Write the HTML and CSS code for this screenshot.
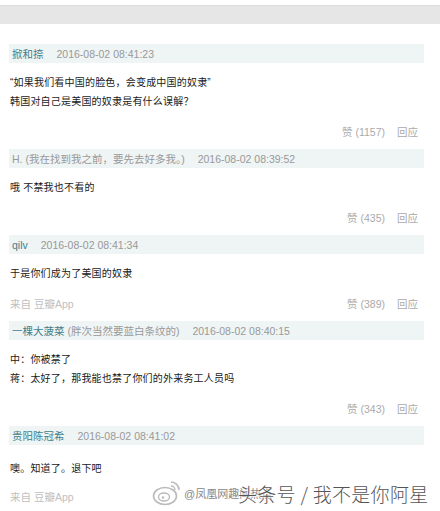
FILE: index.html
```html
<!DOCTYPE html>
<html lang="zh-CN">
<head>
  <meta charset="UTF-8">
  <title>回应</title>
  <link rel="stylesheet" href="styles.css">
</head>
<body>
  <div class="topbar"></div>

  <div class="comments">
    <div class="comment">
      <div class="comment-head">
        <span class="author">掀和捺</span>
        <span class="time">2016-08-02 08:41:23</span>
      </div>
      <div class="comment-body">
        <p>“如果我们看中国的脸色，会变成中国的奴隶”</p>
        <p>韩国对自己是美国的奴隶是有什么误解？</p>
      </div>
      <div class="comment-foot">
        <span class="from"></span>
        <span class="acts"><span>赞 (1157)</span><span>回应</span></span>
      </div>
    </div>

    <div class="comment">
      <div class="comment-head">
        <span class="author plain">H. (我在找到我之前，要先去好多我。)</span>
        <span class="time">2016-08-02 08:39:52</span>
      </div>
      <div class="comment-body">
        <p>哦 不禁我也不看的</p>
      </div>
      <div class="comment-foot">
        <span class="from"></span>
        <span class="acts"><span>赞 (435)</span><span>回应</span></span>
      </div>
    </div>

    <div class="comment">
      <div class="comment-head">
        <span class="author">qilv</span>
        <span class="time">2016-08-02 08:41:34</span>
      </div>
      <div class="comment-body">
        <p>于是你们成为了美国的奴隶</p>
      </div>
      <div class="comment-foot">
        <span class="from">来自 豆瓣App</span>
        <span class="acts"><span>赞 (389)</span><span>回应</span></span>
      </div>
    </div>

    <div class="comment">
      <div class="comment-head">
        <span class="author">一棵大菠菜 <span class="sign">(胖次当然要蓝白条纹的)</span></span>
        <span class="time">2016-08-02 08:40:15</span>
      </div>
      <div class="comment-body">
        <p>中：你被禁了</p>
        <p>蒋：太好了，那我能也禁了你们的外来务工人员吗</p>
      </div>
      <div class="comment-foot">
        <span class="from"></span>
        <span class="acts"><span>赞 (343)</span><span>回应</span></span>
      </div>
    </div>

    <div class="comment last">
      <div class="comment-head">
        <span class="author">贵阳陈冠希</span>
        <span class="time">2016-08-02 08:41:02</span>
      </div>
      <div class="comment-body">
        <p>噢。知道了。退下吧</p>
      </div>
      <div class="comment-foot">
        <span class="from">来自 豆瓣App</span>
      </div>
    </div>
  </div>

  <div class="watermark">
    <svg class="weibo" width="30" height="28" viewBox="0 0 30 28">
      <ellipse cx="13" cy="17" rx="11.5" ry="8.5" fill="none" stroke="#bbb" stroke-width="1.6"/>
      <ellipse cx="12" cy="18" rx="5.5" ry="4" fill="none" stroke="#bbb" stroke-width="1.4"/>
      <circle cx="11" cy="18.5" r="1.3" fill="#bbb"/>
      <path d="M19 3 a8 8 0 0 1 8 8" fill="none" stroke="#bbb" stroke-width="1.6"/>
      <path d="M19 7 a4 4 0 0 1 4 4" fill="none" stroke="#bbb" stroke-width="1.4"/>
    </svg>
    <span class="wm-at">@凤凰网趣闻热点</span>
    <span class="wm-big">头条号 / 我不是你阿星</span>
  </div>
</body>
</html>
```

FILE: styles.css
```css
* { box-sizing: border-box; margin: 0; padding: 0; }

body {
  position: relative;
  width: 440px;
  height: 511px;
  overflow: hidden;
  background: #fff;
  font-family: "Liberation Sans", "Noto Sans CJK SC", sans-serif;
  font-size: 10px;
  color: #222;
}

/* grey bar at the top of the crop */
.topbar {
  margin-top: 5px;
  height: 19px;
  background: #e6e6e6;
  border-top: 1px solid #dcdcdc;
}

.comments {
  margin: 20px 16px 0 9px;
}

.comment {
  margin-bottom: 8px;
}

.comment-head {
  display: flex;
  align-items: center;
  gap: 13px;
  height: 19px;
  padding-left: 3px;
  background: #eff4f4;
  font-size: 10.5px;
}
.author { color: #3f7f8c; }
.author.plain,
.sign { color: #999; }
.time { color: #999; }

.comment-body {
  margin: 10px 0 11px 1px;
  line-height: 19px;
  letter-spacing: 0.2px;
  color: #1a1a1a;
}

.comment-foot {
  display: flex;
  justify-content: space-between;
  align-items: center;
  height: 19px;
  padding: 0 6px 0 1px;
  font-size: 10.5px;
  color: #aaa;
}
.from { color: #c0c0c0; }
.acts { display: flex; gap: 12px; }

.comment.last .comment-body { margin-top: 14px; margin-bottom: 9px; }

/* watermark laid over the last row */
.watermark {
  position: absolute;
  left: 152px;
  top: 479px;
  display: flex;
  align-items: center;
  white-space: nowrap;
}
.weibo { margin-right: 2px; }
.wm-at {
  width: 54px;
  font-size: 11px;
  color: #888;
}
.wm-big {
  font-family: "Noto Sans CJK SC", sans-serif;
  font-size: 19px;
  font-weight: 300;
  color: #555;
  letter-spacing: 0.3px;
  text-shadow: 0 0 2px #fff, 0 0 2px #fff;
}
```
